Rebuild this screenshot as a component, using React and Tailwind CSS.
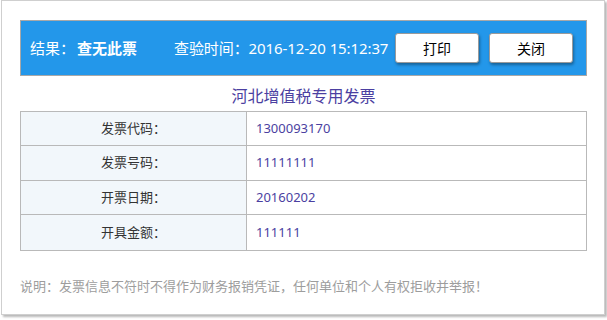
const rows = [
  { label: "发票代码：", value: "1300093170", h: "h-[34px]" },
  { label: "发票号码：", value: "11111111", h: "h-[35px]" },
  { label: "开票日期：", value: "20160202", h: "h-[34px]" },
  { label: "开具金额：", value: "111111", h: "h-[35px]" },
];

const font = { fontFamily: '"Noto Sans", "Noto Sans CJK SC", sans-serif' };

export default function App() {
  return (
    <div className="w-[607px] h-[320px] bg-white" style={font}>
      <div className="ml-[1px] w-[604px] h-[315px] border border-[#cfcfcf] bg-white shadow-[2px_2px_2px_rgba(0,0,0,0.28)] px-[18px] pt-[19px]">
        <div className="w-[567px] h-[56px] border border-[#a8a8a8] bg-[#2397ea] flex items-center pl-[9px] pr-[13px] text-white">
          <span className="text-[15px]">结果：</span>
          <span className="text-[15px] font-bold ml-[2px]">查无此票</span>
          <span className="text-[15px] ml-[37px] tracking-[-0.1px]">查验时间：2016-12-20 15:12:37</span>
          <div className="ml-auto flex gap-[10px]">
            <button className="w-[84px] h-[30px] bg-white border border-[#9a9a9a] rounded-[3px] shadow-[1px_2px_3px_rgba(0,0,0,0.35)] text-[14px] text-black">
              打印
            </button>
            <button className="w-[84px] h-[30px] bg-white border border-[#9a9a9a] rounded-[3px] shadow-[1px_2px_3px_rgba(0,0,0,0.35)] text-[14px] text-black">
              关闭
            </button>
          </div>
        </div>

        <div className="w-[567px] pt-[10px] text-center text-[16px] leading-[20px] text-[#4b3fa1]">
          河北增值税专用发票
        </div>

        <div className="w-[567px] mt-[5px] border border-[#b9b9b9]">
          {rows.map((r, i) => (
            <div
              key={r.label}
              className={`flex ${r.h} ${i < rows.length - 1 ? "border-b border-[#b9b9b9]" : ""}`}
            >
              <div className="w-[226px] bg-[#f2f7fb] border-r border-[#b9b9b9] flex items-center justify-center text-[13px] text-[#333]">
                {r.label}
              </div>
              <div className="flex-1 flex items-center pl-[9px] text-[13px] text-[#4b3fa1]">
                {r.value}
              </div>
            </div>
          ))}
        </div>

        <p className="mt-[25px] text-[13px] leading-[20px] text-[#9d9d9d]">
          说明：发票信息不符时不得作为财务报销凭证，任何单位和个人有权拒收并举报！
        </p>
      </div>
    </div>
  );
}
